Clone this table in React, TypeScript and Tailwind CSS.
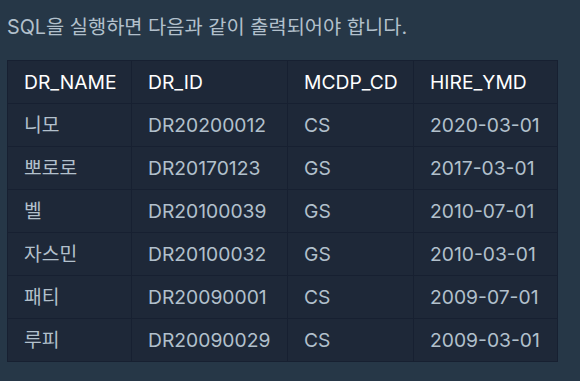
const rows = [
  ["니모", "DR20200012", "CS", "2020-03-01"],
  ["뽀로로", "DR20170123", "GS", "2017-03-01"],
  ["벨", "DR20100039", "GS", "2010-07-01"],
  ["자스민", "DR20100032", "GS", "2010-03-01"],
  ["패티", "DR20090001", "CS", "2009-07-01"],
  ["루피", "DR20090029", "CS", "2009-03-01"],
]

const cols = ["DR_NAME", "DR_ID", "MCDP_CD", "HIRE_YMD"]
const widths = ["w-[124px]", "w-[156px]", "w-[126px]", "w-[144px]"]

export default function App() {
  return (
    <div
      className="h-[381px] w-[580px] overflow-hidden bg-[#263747] pl-[7px] pt-[14px] text-[#b2c0cc]"
      style={{ fontFamily: "Inter, 'Noto Sans CJK KR', sans-serif" }}
    >
      <p className="h-[26px] text-[19.8px] leading-[26px]">SQL을 실행하면 다음과 같이 출력되어야 합니다.</p>
      <table className="mt-[20px] w-[551px] table-fixed border-collapse bg-[#1e2838] text-[19.3px]">
        <thead>
          <tr className="h-[43px]">
            {cols.map((c, i) => (
              <th key={c} className={`${widths[i]} whitespace-nowrap border border-[#172031] px-4 text-left font-normal text-white`}>
                {c}
              </th>
            ))}
          </tr>
        </thead>
        <tbody>
          {rows.map((r) => (
            <tr key={r[1]} className="h-[43px]">
              {r.map((v, i) => (
                <td key={i} className="whitespace-nowrap border border-[#172031] px-4 text-left">
                  {v}
                </td>
              ))}
            </tr>
          ))}
        </tbody>
      </table>
    </div>
  )
}
